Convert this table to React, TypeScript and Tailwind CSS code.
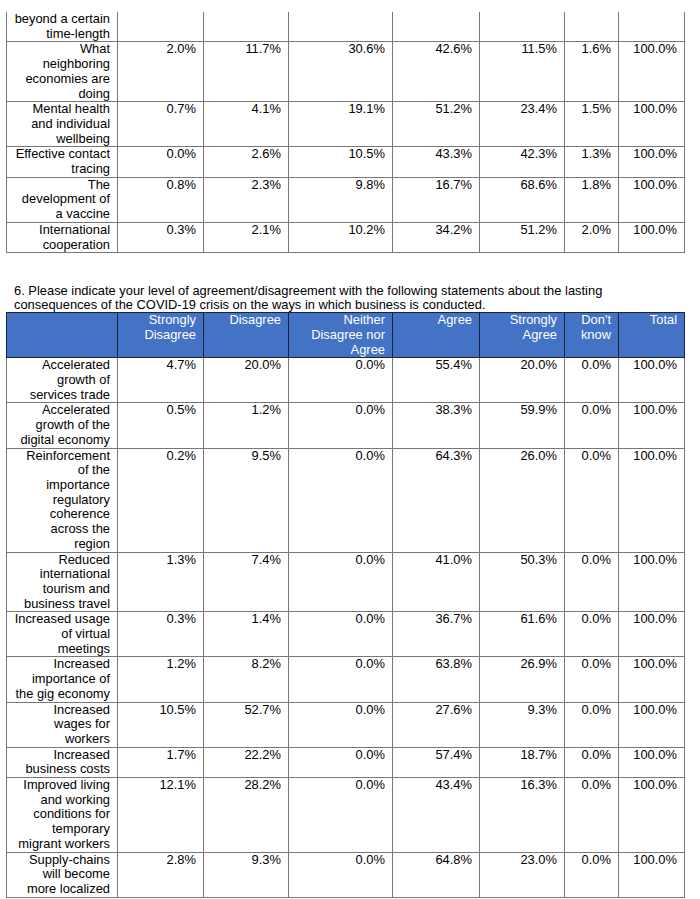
const cols = [111, 86, 85, 104, 87, 85, 54, 66];

const topRows: [string, string[]][] = [
  ["beyond a certain time-length", ["", "", "", "", "", "", ""]],
  ["What neighboring economies are doing", ["2.0%", "11.7%", "30.6%", "42.6%", "11.5%", "1.6%", "100.0%"]],
  ["Mental health and individual wellbeing", ["0.7%", "4.1%", "19.1%", "51.2%", "23.4%", "1.5%", "100.0%"]],
  ["Effective contact tracing", ["0.0%", "2.6%", "10.5%", "43.3%", "42.3%", "1.3%", "100.0%"]],
  ["The development of a vaccine", ["0.8%", "2.3%", "9.8%", "16.7%", "68.6%", "1.8%", "100.0%"]],
  ["International cooperation", ["0.3%", "2.1%", "10.2%", "34.2%", "51.2%", "2.0%", "100.0%"]],
];

const headers = ["", "Strongly Disagree", "Disagree", "Neither Disagree nor Agree", "Agree", "Strongly Agree", "Don't know", "Total"];

const rows: [string, string[]][] = [
  ["Accelerated growth of services trade", ["4.7%", "20.0%", "0.0%", "55.4%", "20.0%", "0.0%", "100.0%"]],
  ["Accelerated growth of the digital economy", ["0.5%", "1.2%", "0.0%", "38.3%", "59.9%", "0.0%", "100.0%"]],
  ["Reinforcement of the importance regulatory coherence across the region", ["0.2%", "9.5%", "0.0%", "64.3%", "26.0%", "0.0%", "100.0%"]],
  ["Reduced international tourism and business travel", ["1.3%", "7.4%", "0.0%", "41.0%", "50.3%", "0.0%", "100.0%"]],
  ["Increased usage of virtual meetings", ["0.3%", "1.4%", "0.0%", "36.7%", "61.6%", "0.0%", "100.0%"]],
  ["Increased importance of the gig economy", ["1.2%", "8.2%", "0.0%", "63.8%", "26.9%", "0.0%", "100.0%"]],
  ["Increased wages for workers", ["10.5%", "52.7%", "0.0%", "27.6%", "9.3%", "0.0%", "100.0%"]],
  ["Increased business costs", ["1.7%", "22.2%", "0.0%", "57.4%", "18.7%", "0.0%", "100.0%"]],
  ["Improved living and working conditions for temporary migrant workers", ["12.1%", "28.2%", "0.0%", "43.4%", "16.3%", "0.0%", "100.0%"]],
  ["Supply-chains will become more localized", ["2.8%", "9.3%", "0.0%", "64.8%", "23.0%", "0.0%", "100.0%"]],
];

const Cols = () => (
  <colgroup>
    {cols.map((w, i) => (
      <col key={i} style={{ width: w }} />
    ))}
  </colgroup>
);

const cell = "border border-[#777] align-top text-right pl-[7px] pr-[7px] py-0";

const App = () => {
  return (
    <div className="w-[700px] h-[899px] bg-white overflow-hidden text-[12.9px] leading-[14.7px] text-black" style={{ fontFamily: '"Liberation Sans", Arial, sans-serif' }}>
      {/* table continued from previous page */}
      <table className="mt-[12px] ml-[6px] w-[678px] table-fixed border-collapse">
        <Cols />
        <tbody>
          {topRows.map(([label, vals], r) => (
            <tr key={r}>
              <td className={`${cell} ${r === 0 ? "border-t-0" : ""}`}>{label}</td>
              {vals.map((v, i) => (
                <td key={i} className={`${cell} ${r === 0 ? "border-t-0" : ""}`}>{v}</td>
              ))}
            </tr>
          ))}
        </tbody>
      </table>

      <p className="mt-[31px] ml-[14px] w-[620px] leading-[14px]">
        6. Please indicate your level of agreement/disagreement with the following statements about the lasting consequences of the COVID-19 crisis on the ways in which business is conducted.
      </p>

      <table className="ml-[6px] w-[678px] table-fixed border-collapse">
        <Cols />
        <thead>
          <tr className="bg-[#4472c4] text-white">
            {headers.map((h, i) => (
              <th key={i} className="border border-[#1a2338] align-top text-right font-normal pl-[7px] pr-[7px] py-0">
                {h}
              </th>
            ))}
          </tr>
        </thead>
        <tbody>
          {rows.map(([label, vals], r) => (
            <tr key={r}>
              <td className={cell}>{label}</td>
              {vals.map((v, i) => (
                <td key={i} className={cell}>{v}</td>
              ))}
            </tr>
          ))}
        </tbody>
      </table>
    </div>
  );
};

export default App;
